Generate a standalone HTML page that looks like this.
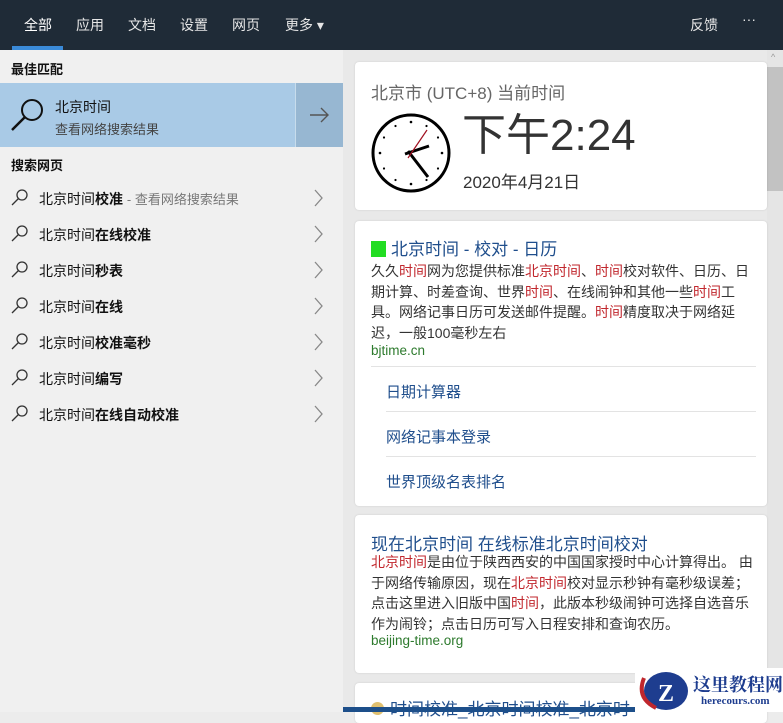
<!DOCTYPE html><html><head><meta charset="utf-8"><style>
*{margin:0;padding:0;box-sizing:border-box}
body{width:783px;height:712px;overflow:hidden;font-family:"Liberation Sans","Noto Sans CJK SC",sans-serif;background:#ececec;position:relative}
.top{position:absolute;left:0;top:0;width:783px;height:50px;background:#1f2b37;color:#e6e6e6;font-size:14px}
.top span{position:absolute;top:15px}
.left{position:absolute;left:0;top:50px;width:343px;height:662px;background:#f0f0f0}
.h{position:absolute;left:11px;font-size:13px;font-weight:bold;color:#111}
.best{position:absolute;left:0;top:83px;width:295px;height:64px;background:#a9cae6}
.arr{position:absolute;left:295px;top:83px;width:48px;height:64px;background:#97b7d2;border-left:1px solid #c7dcec}
.row{position:absolute;left:0;width:343px;height:36px;font-size:14px;color:#111}
.row .t{position:absolute;left:39px;top:9px}
.row b{font-weight:bold}
.row .g{color:#777;font-size:13px}
.right{position:absolute;left:343px;top:50px;width:440px;height:662px;background:#e9e9e9}
.card{position:absolute;left:355px;width:412px;background:#fff;border-radius:4px;box-shadow:0 0 2px rgba(0,0,0,.12)}
.sb{position:absolute;left:767px;top:50px;width:16px;height:662px;background:#e5e5e5}
.p{font-size:14px;color:#333;line-height:20.5px}
.r{color:#c1272d}
.link{position:absolute;left:386px;font-size:15px;color:#1f4e8c}
</style></head><body>
<div class="top">
<span style="left:24px;color:#fff">全部</span><span style="left:76px">应用</span><span style="left:128px">文档</span><span style="left:180px">设置</span><span style="left:232px">网页</span><span style="left:285px">更多 ▾</span><span style="left:690px">反馈</span><span style="left:742px;top:11px">···</span>
<div style="position:absolute;left:12px;top:46px;width:51px;height:4px;background:#3a8ad8"></div>
</div>
<div class="left">
</div>
<div class="h" style="top:59px">最佳匹配</div>
<div class="best">
<svg style="position:absolute;left:10px;top:13px" width="36" height="36"><circle cx="22" cy="14" r="10" fill="none" stroke="#111" stroke-width="2"/><line x1="15" y1="21" x2="2" y2="34" stroke="#111" stroke-width="2.5"/></svg>
<div style="position:absolute;left:55px;top:14px;font-size:14px;color:#111">北京时间</div>
<div style="position:absolute;left:55px;top:36px;font-size:13px;color:#444">查看网络搜索结果</div>
</div>
<div class="arr"><svg style="position:absolute;left:13px;top:23px" width="22" height="18"><path d="M1 9H19M12 2L19 9L12 16" fill="none" stroke="#555" stroke-width="1.4"/></svg></div>
<div class="h" style="top:155px">搜索网页</div>
<div class="row" style="top:180px"><span class="t">北京时间<b>校准</b> <span class="g">- 查看网络搜索结果</span></span></div>
<div class="row" style="top:216px"><span class="t">北京时间<b>在线校准</b></span></div>
<div class="row" style="top:252px"><span class="t">北京时间<b>秒表</b></span></div>
<div class="row" style="top:288px"><span class="t">北京时间<b>在线</b></span></div>
<div class="row" style="top:324px"><span class="t">北京时间<b>校准毫秒</b></span></div>
<div class="row" style="top:360px"><span class="t">北京时间<b>编写</b></span></div>
<div class="row" style="top:396px"><span class="t">北京时间<b>在线自动校准</b></span></div>
<svg style="position:absolute;left:0;top:180px" width="343" height="252">
<g fill="none" stroke="#333" stroke-width="1.3">
<g id="i"><circle cx="22" cy="15" r="5"/><line x1="18.5" y1="18.5" x2="12" y2="25"/><path d="M315 10L322 18L315 26" stroke="#888"/></g>
<use href="#i" y="36"/><use href="#i" y="72"/><use href="#i" y="108"/><use href="#i" y="144"/><use href="#i" y="180"/><use href="#i" y="216"/>
</g></svg>
<div class="right"></div>
<div class="sb"><div style="position:absolute;left:0;top:17px;width:16px;height:124px;background:#c2c2c2"></div><div style="position:absolute;left:4px;top:2px;font-size:9px;color:#999">^</div></div>
<div class="card" style="top:62px;height:148px">
<div style="position:absolute;left:16px;top:17px;font-size:17px;color:#666">北京市 (UTC+8) 当前时间</div>
<svg style="position:absolute;left:15px;top:50px" width="82" height="82"><circle cx="41" cy="41" r="38" fill="none" stroke="#000" stroke-width="3"/>
<g fill="#000"><circle cx="41" cy="10" r="1.3"/><circle cx="41" cy="72" r="1.3"/><circle cx="10" cy="41" r="1.3"/><circle cx="72" cy="41" r="1.3"/><circle cx="56.5" cy="14" r="1.1"/><circle cx="68" cy="25.5" r="1.1"/><circle cx="68" cy="56.5" r="1.1"/><circle cx="56.5" cy="68" r="1.1"/><circle cx="25.5" cy="68" r="1.1"/><circle cx="14" cy="56.5" r="1.1"/><circle cx="14" cy="25.5" r="1.1"/><circle cx="25.5" cy="14" r="1.1"/></g>
<line x1="35" y1="42" x2="59" y2="34" stroke="#000" stroke-width="3"/><line x1="38" y1="39" x2="58" y2="65" stroke="#000" stroke-width="3"/><line x1="38" y1="46" x2="57" y2="18" stroke="#a01020" stroke-width="1.2"/></svg>
<div style="position:absolute;left:107px;top:48px;font-size:44px;color:#333;line-height:52px">下午2:24</div>
<div style="position:absolute;left:108px;top:106px;font-size:17px;color:#333">2020年4月21日</div>
</div>
<div class="card" style="top:221px;height:285px">
<div style="position:absolute;left:16px;top:14px;font-size:17px;color:#1f4e8c"><span style="display:inline-block;width:15px;height:16px;background:#22dd22;vertical-align:-2px;margin-right:5px"></span>北京时间 - 校对 - 日历</div>
<div class="p" style="position:absolute;left:16px;top:40px;width:382px">久久<span class="r">时间</span>网为您提供标准<span class="r">北京时间</span>、<span class="r">时间</span>校对软件、日历、日期计算、时差查询、世界<span class="r">时间</span>、在线闹钟和其他一些<span class="r">时间</span>工具。网络记事日历可发送邮件提醒。<span class="r">时间</span>精度取决于网络延迟，一般100毫秒左右</div>
<div style="position:absolute;left:16px;top:122px;font-size:13.5px;color:#2d7a2d">bjtime.cn</div>
<div style="position:absolute;left:16px;top:145px;width:385px;border-top:1px solid #e3e3e3"></div>
<div style="position:absolute;left:31px;top:190px;width:370px;border-top:1px solid #e3e3e3"></div>
<div style="position:absolute;left:31px;top:235px;width:370px;border-top:1px solid #e3e3e3"></div>
</div>
<div class="link" style="top:381px">日期计算器</div>
<div class="link" style="top:426px">网络记事本登录</div>
<div class="link" style="top:471px">世界顶级名表排名</div>
<div class="card" style="top:515px;height:158px">
<div style="position:absolute;left:16px;top:15px;font-size:17px;color:#1f4e8c">现在北京时间 在线标准北京时间校对</div>
<div class="p" style="position:absolute;left:16px;top:37px;width:390px"><span class="r">北京时间</span>是由位于陕西西安的中国国家授时中心计算得出。 由于网络传输原因，现在<span class="r">北京时间</span>校对显示秒钟有毫秒级误差；点击这里进入旧版中国<span class="r">时间</span>，此版本秒级闹钟可选择自选音乐作为闹铃；点击日历可写入日程安排和查询农历。</div>
<div style="position:absolute;left:16px;top:118px;font-size:13.5px;color:#2d7a2d">beijing-time.org</div>
</div>
<div class="card" style="top:683px;height:40px">
<div style="position:absolute;left:16px;top:12px;font-size:17px;color:#1f4e8c"><span style="display:inline-block;width:13px;height:13px;border-radius:50%;background:#e0c070;margin-right:6px"></span>时间校准_北京时间校准_北京时</div>
</div>
<div style="position:absolute;left:343px;top:707px;width:292px;height:5px;background:#1d4f8a"></div>
<div style="position:absolute;left:635px;top:668px;width:148px;height:44px;background:#fff"></div>
<svg style="position:absolute;left:636px;top:668px" width="55" height="44"><ellipse cx="30" cy="23" rx="22" ry="19" fill="#1e3d8f"/><path d="M8 10Q0 30 20 40" stroke="#c0272d" stroke-width="4" fill="none"/><text x="22" y="33" font-size="24" font-weight="bold" fill="#fff" font-family="Liberation Serif">Z</text></svg>
<div style="position:absolute;left:693px;top:671px;font-size:18px;font-weight:bold;color:#1e3d8f;font-family:'Liberation Serif','Noto Serif CJK SC',serif">这里教程网</div>
<div style="position:absolute;left:701px;top:695px;font-size:11px;font-weight:bold;color:#1e3d8f;font-family:'Liberation Serif',serif">herecours.com</div>
</body></html>
